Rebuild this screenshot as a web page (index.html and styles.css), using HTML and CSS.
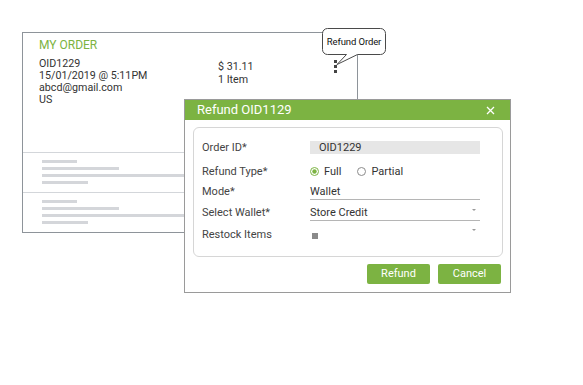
FILE: index.html
```html
<!DOCTYPE html>
<html>
<head>
<meta charset="utf-8">
<link rel="stylesheet" href="styles.css">
</head>
<body>
  <div class="card">
    <div class="card-head">
      <div class="card-title">MY ORDER</div>
      <div class="order-info">
        <div class="info-left">
          <div>OID1229</div>
          <div>15/01/2019 @ 5:11PM</div>
          <div>abcd@gmail.com</div>
          <div>US</div>
        </div>
        <div class="info-right">
          <div>$ 31.11</div>
          <div>1 Item</div>
        </div>
        <div class="kebab"><span></span><span></span><span></span></div>
      </div>
    </div>
    <div class="card-sec">
      <span class="bar bar-a"></span>
      <span class="bar bar-b"></span>
      <span class="bar bar-c"></span>
      <span class="bar bar-d"></span>
    </div>
    <div class="card-sec last">
      <span class="bar bar-a"></span>
      <span class="bar bar-b"></span>
      <span class="bar bar-c"></span>
      <span class="bar bar-d"></span>
    </div>
  </div>

  <div class="tooltip">
    <svg class="tooltip-bg" width="65" height="38" viewBox="0 0 65 38">
      <path d="M5.5,0.5 H58.5 A5,5 0 0 1 63.5,5.5 V21.5 A5,5 0 0 1 58.5,26.5 H35.5 L15,36.5 L24.5,26.5 H5.5 A5,5 0 0 1 0.5,21.5 V5.5 A5,5 0 0 1 5.5,0.5 Z" fill="#fff" stroke="#4a4a4a" stroke-width="1"/>
    </svg>
    <span class="tooltip-text">Refund Order</span>
  </div>

  <div class="dialog">
    <div class="dialog-head">
      <span>Refund OID1129</span>
      <svg class="close" width="9" height="9" viewBox="0 0 9 9"><path d="M1,1 L8,8 M8,1 L1,8" stroke="#fff" stroke-width="1.3" fill="none"/></svg>
    </div>
    <div class="panel">
      <div class="row row-id">
        <div class="label">Order ID*</div>
        <div class="field readonly">OID1229</div>
      </div>
      <div class="row row-type">
        <div class="label">Refund Type*</div>
        <div class="radios">
          <span class="radio">
            <svg width="9" height="9" viewBox="0 0 9 9"><circle cx="4.5" cy="4.5" r="4" fill="#fff" stroke="#7cb342"/><circle cx="4.5" cy="4.5" r="2.2" fill="#7cb342"/></svg>
            Full
          </span>
          <span class="radio">
            <svg width="9" height="9" viewBox="0 0 9 9"><circle cx="4.5" cy="4.5" r="4" fill="#fff" stroke="#8a8a8a"/></svg>
            Partial
          </span>
        </div>
      </div>
      <div class="row row-mode">
        <div class="label">Mode*</div>
        <div class="field underline">Wallet</div>
      </div>
      <div class="row row-wallet">
        <div class="label">Select Wallet*</div>
        <div class="field underline select">Store Credit<span class="caret"></span></div>
      </div>
      <div class="row row-restock">
        <div class="label">Restock Items</div>
        <div class="field select"><span class="check"></span><span class="caret"></span></div>
      </div>
    </div>
    <div class="actions">
      <button class="btn">Refund</button>
      <button class="btn">Cancel</button>
    </div>
  </div>
</body>
</html>
```

FILE: styles.css
```css
* { box-sizing: border-box; }

body {
  margin: 0;
  padding: 32px 0 0 22px;
  background: #fff;
  font-family: Roboto, "Liberation Sans", sans-serif;
  color: #333;
}

.card {
  width: 336px;
  height: 201px;
  border: 1px solid #8e949a;
  background: #fff;
}

.card-head {
  height: 120px;
  padding: 5px 16px 0 16px;
  border-bottom: 1px solid #d3d6da;
}

.card-title {
  font-size: 12px;
  line-height: 14px;
  color: #7cb342;
}

.order-info {
  margin-top: 6px;
  display: grid;
  grid-template-columns: 179px 116px 3px;
  font-size: 10.7px;
  color: #333;
}

.info-left { line-height: 12px; }

.info-right {
  line-height: 13px;
  padding-top: 2px;
}

.kebab {
  display: flex;
  flex-direction: column;
  gap: 2px;
  margin-top: 2px;
}

.kebab span {
  display: block;
  width: 3px;
  height: 3px;
  background: #444;
}

.card-sec {
  height: 40px;
  padding: 7px 0 0 19px;
  border-bottom: 1px solid #d3d6da;
}

.card-sec.last {
  height: 39px;
  border-bottom: 0;
}

.bar {
  display: block;
  height: 3px;
  margin-bottom: 4px;
  background: #d4d6da;
}

.bar-a { width: 35px; }
.bar-b { width: 77px; }
.bar-c { width: 300px; }
.bar-d { width: 46px; }

.tooltip {
  position: absolute;
  left: 322px;
  top: 28px;
  width: 65px;
  height: 38px;
}

.tooltip-bg {
  position: absolute;
  left: 0;
  top: 0;
}

.tooltip-text {
  position: absolute;
  left: 0;
  top: 7px;
  width: 64px;
  text-align: center;
  font-size: 9.5px;
  line-height: 13px;
  color: #111;
  letter-spacing: -0.1px;
}

.dialog {
  position: absolute;
  left: 184px;
  top: 99px;
  width: 327px;
  height: 194px;
  border: 1px solid #9a9a9a;
  background: #fff;
}

.dialog-head {
  height: 20px;
  padding: 0 15px 0 12px;
  background: #7cb342;
  color: #fff;
  font-size: 13px;
  line-height: 20px;
  display: flex;
  justify-content: space-between;
  align-items: center;
}

.close { margin-top: 1px; }

.panel {
  width: 310px;
  height: 130px;
  margin: 7px 0 0 8px;
  border: 1px solid #d6d6d6;
  border-radius: 6px;
  padding: 13px 0 0 8px;
}

.row {
  display: flex;
  align-items: flex-start;
  font-size: 11px;
  line-height: 14px;
}

.row-id { height: 24px; }
.row-type { height: 20px; }
.row-mode { height: 21px; }
.row-wallet { height: 22px; }
.row-restock { height: 14px; }

.label {
  width: 108px;
  color: #444;
}

.field {
  width: 170px;
  color: #333;
}

.field.readonly {
  height: 13px;
  line-height: 13px;
  padding-left: 9px;
  background: #e6e6e6;
}

.field.underline {
  border-bottom: 1px solid #b5b5b5;
}

.field.select {
  display: flex;
  align-items: flex-start;
}

.caret {
  margin-left: auto;
  margin-right: 4px;
  margin-top: 3px;
  width: 0;
  height: 0;
  border-left: 2px solid transparent;
  border-right: 2px solid transparent;
  border-top: 2px solid #9a9a9a;
}

.row-restock .caret { margin-top: 1px; }

.check {
  display: block;
  width: 6px;
  height: 6px;
  margin: 5px 0 0 2px;
  background: #8a8a8a;
}

.radios {
  display: flex;
  gap: 16px;
  color: #333;
}

.radio {
  display: flex;
  align-items: flex-start;
  gap: 5px;
}

.radio svg { margin-top: 2px; }

.actions {
  display: flex;
  justify-content: flex-end;
  gap: 8px;
  padding: 7px 9px 0 0;
}

.btn {
  width: 63px;
  height: 20px;
  padding: 0;
  border: 0;
  border-radius: 2px;
  background: #7cb342;
  color: #fff;
  font-family: Roboto, "Liberation Sans", sans-serif;
  font-size: 11px;
  line-height: 20px;
}
```
